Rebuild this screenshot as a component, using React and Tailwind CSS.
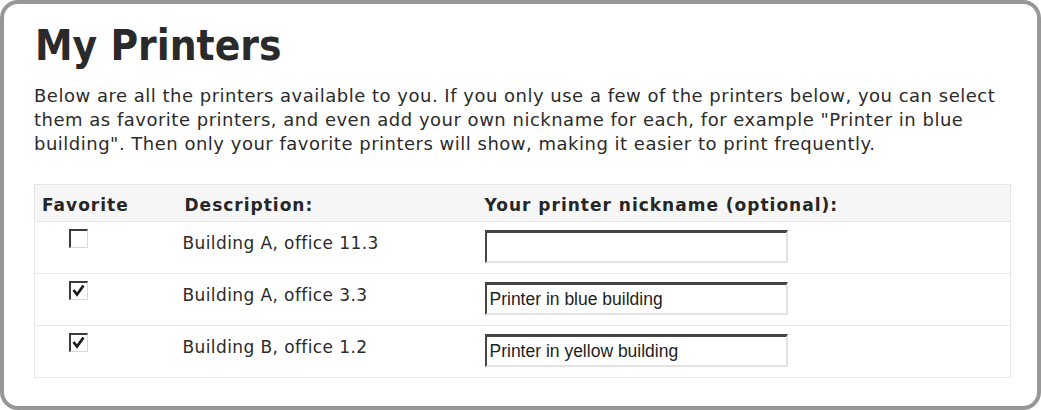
const printers = [
  { id: 1, description: 'Building A, office 11.3', favorite: false, nickname: '' },
  { id: 2, description: 'Building A, office 3.3', favorite: true, nickname: 'Printer in blue building' },
  { id: 3, description: 'Building B, office 1.2', favorite: true, nickname: 'Printer in yellow building' },
]

const dejavu = { fontFamily: '"DejaVu Sans", Verdana, sans-serif' }

function OldCheckbox({ checked }) {
  return (
    <div className="ml-[26px] h-[19px] w-[19px] border-t-2 border-l-2 border-r border-b border-t-[#3c3c3c] border-l-[#3c3c3c] border-r-[#d8d8d8] border-b-[#d8d8d8] bg-white">
      {checked && (
        <svg viewBox="0 0 16 16" className="h-full w-full">
          <path d="M2.5 7 L6 11.5 L12.5 2.5" fill="none" stroke="#1c1c1c" strokeWidth="2.8" />
        </svg>
      )}
    </div>
  )
}

function App() {
  return (
    <div className="h-[410px] w-[1041px] bg-white">
      <div className="h-full w-full rounded-[18px] border-4 border-[#979797] bg-white pt-[17px] pl-[30px] pr-[27px] text-[#262626]">
        <h1
          className="ml-[1px] text-[42px] leading-[50px] font-bold text-[#2a2a2a]"
          style={{ fontFamily: '"DejaVu Sans Condensed", "DejaVu Sans", sans-serif' }}
        >
          My Printers
        </h1>
        <p className="mt-[13px] text-[18px] leading-[24px] tracking-[0.5px] text-[#2b2b2b]" style={dejavu}>
          Below are all the printers available to you. If you only use a few of the printers below, you can select
          them as favorite printers, and even add your own nickname for each, for example "Printer in blue
          building". Then only your favorite printers will show, making it easier to print frequently.
        </p>

        <table className="mt-[28px] w-[977px] border-collapse border border-[#e6e6e6]" style={dejavu}>
          <thead>
            <tr className="h-[37px] bg-[#f6f6f6] border-b border-[#e6e6e6]">
              <th className="w-[143px] pl-[7px] pt-[5px] text-left text-[17px] font-bold tracking-[1px] text-[#262626]">
                Favorite
              </th>
              <th className="w-[300px] pl-[7px] pt-[5px] text-left text-[17px] font-bold tracking-[1px] text-[#262626]">
                Description:
              </th>
              <th className="pl-[7px] pt-[5px] text-left text-[17px] font-bold tracking-[1px] text-[#262626]">
                Your printer nickname (optional):
              </th>
            </tr>
          </thead>
          <tbody>
            {printers.map((p) => (
              <tr key={p.id} className="h-[52px] border-b border-[#e6e6e6]">
                <td className="pl-[8px] pt-[7px] align-top">
                  <OldCheckbox checked={p.favorite} />
                </td>
                <td className="pl-[5px] pt-[9px] align-top text-[17px] leading-[24px] tracking-[0.4px] text-[#2b2b2b]">
                  {p.description}
                </td>
                <td className="pl-[7px] pt-[8px] align-top">
                  <div
                    className="flex h-[33px] w-[303px] items-center border-t-[3px] border-l-2 border-r-2 border-b-2 border-t-[#444] border-l-[#444] border-r-[#e2e2e2] border-b-[#e2e2e2] bg-white pl-[3px] text-[17.5px] text-[#1e1e1e]"
                    style={{ fontFamily: '"Liberation Sans", Arial, sans-serif' }}
                  >
                    {p.nickname}
                  </div>
                </td>
              </tr>
            ))}
          </tbody>
        </table>
      </div>
    </div>
  )
}

export default App
